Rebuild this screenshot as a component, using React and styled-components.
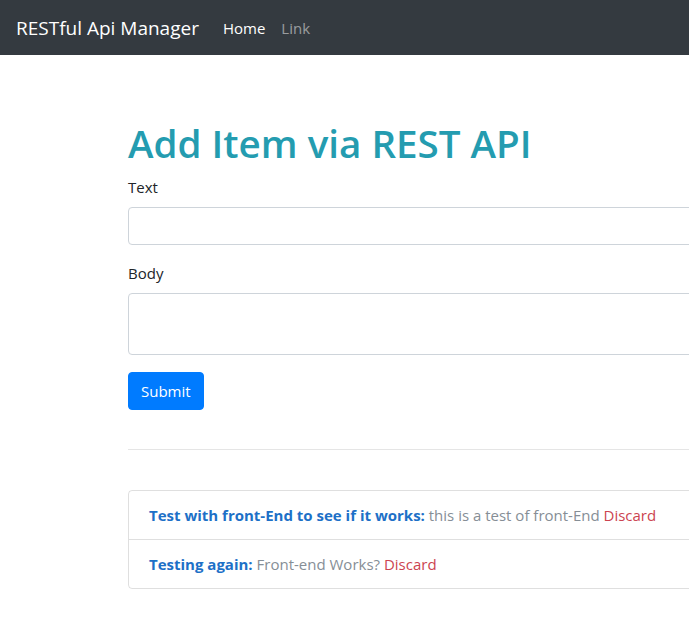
import styled, { createGlobalStyle } from 'styled-components';

const GlobalStyle = createGlobalStyle`
  html, body {
    margin: 0;
    overflow-x: hidden;
    background: #fff;
  }
  body {
    font-family: 'Open Sans', 'Noto Sans', sans-serif;
    font-size: 15px;
    line-height: 24px;
    color: #212529;
  }
  * {
    box-sizing: border-box;
  }
`;

const Navbar = styled.nav`
  display: flex;
  align-items: center;
  height: 55px;
  padding: 0 16px;
  background: #343a40;
`;

const Brand = styled.a`
  color: #fff;
  font-size: 19px;
  line-height: 30px;
  margin-right: 16px;
  text-decoration: none;
`;

const NavLink = styled.a`
  color: ${({ active }) => (active ? '#fff' : 'rgba(255, 255, 255, 0.5)')};
  padding: 8px;
  text-decoration: none;
`;

const Main = styled.main`
  width: 1060px;
  padding: 64px 0 40px 128px;
`;

const Heading = styled.h1`
  margin: 0 0 8px;
  font-size: 38.6px;
  font-weight: 600;
  line-height: 48px;
  color: #249cb0;
`;

const FormGroup = styled.div`
  margin-bottom: 16px;
`;

const Label = styled.label`
  display: block;
  margin-bottom: 8px;
`;

const Input = styled.input`
  display: block;
  width: 100%;
  height: 38px;
  padding: 6px 12px;
  font: inherit;
  border: 1px solid #ced4da;
  border-radius: 4px;
`;

const TextArea = styled.textarea`
  display: block;
  width: 100%;
  height: 62px;
  padding: 6px 12px;
  font: inherit;
  border: 1px solid #ced4da;
  border-radius: 4px;
  resize: vertical;
`;

const Button = styled.button`
  display: block;
  height: 38px;
  margin-top: 17px;
  padding: 6px 12px;
  font: inherit;
  color: #fff;
  background: #007bff;
  border: 1px solid #007bff;
  border-radius: 4px;
`;

const Divider = styled.hr`
  margin: 39px 0 40px;
  border: 0;
  border-top: 1px solid rgba(0, 0, 0, 0.1);
`;

const List = styled.ul`
  margin: 0;
  padding: 0;
  list-style: none;
  border: 1px solid rgba(0, 0, 0, 0.125);
  border-radius: 4px;
`;

const Item = styled.li`
  padding: 12px 20px;
  & + & {
    border-top: 1px solid rgba(0, 0, 0, 0.125);
  }
`;

const Title = styled.strong`
  color: #1d70c7;
  font-weight: 700;
`;

const Body = styled.span`
  color: #868e96;
`;

const Discard = styled.a`
  color: #cc4450;
  cursor: pointer;
`;

const items = [
  { title: 'Test with front-End to see if it works:', body: 'this is a test of front-End' },
  { title: 'Testing again:', body: 'Front-end Works?' },
];

export default function App() {
  return (
    <>
      <GlobalStyle />
      <Navbar>
        <Brand href="#">RESTful Api Manager</Brand>
        <NavLink href="#" active>Home</NavLink>
        <NavLink href="#">Link</NavLink>
      </Navbar>
      <Main>
        <Heading>Add Item via REST API</Heading>
        <form onSubmit={(e) => e.preventDefault()}>
          <FormGroup>
            <Label>Text</Label>
            <Input type="text" />
          </FormGroup>
          <FormGroup>
            <Label>Body</Label>
            <TextArea rows={2} />
          </FormGroup>
          <Button type="submit">Submit</Button>
        </form>
        <Divider />
        <List>
          {items.map((item) => (
            <Item key={item.title}>
              <Title>{item.title}</Title> <Body>{item.body}</Body> <Discard>Discard</Discard>
            </Item>
          ))}
        </List>
      </Main>
    </>
  );
}
